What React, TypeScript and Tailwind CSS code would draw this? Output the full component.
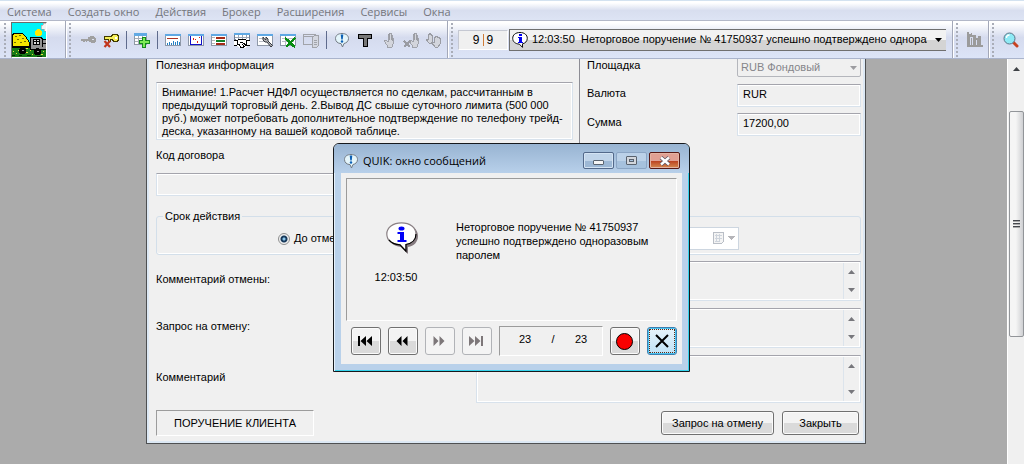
import type { ReactNode } from "react";

const menuItems = ["Система", "Создать окно", "Действия", "Брокер", "Расширения", "Сервисы", "Окна"];

function Icon({ children }: { children: ReactNode }) {
  return (
    <svg viewBox="0 0 16 16" className="block h-4 w-4" shapeRendering="crispEdges" aria-hidden="true">
      {children}
    </svg>
  );
}

function Tool({ label, children }: { label: string; children: ReactNode }) {
  return (
    <button type="button" aria-label={label} className="flex h-6 w-[23px] shrink-0 items-center justify-center">
      {children}
    </button>
  );
}

function Grip() {
  return (
    <span className="flex h-full w-[3px] shrink-0 flex-col gap-[2px] overflow-hidden py-[2px]">
      {Array.from({ length: 9 }, (_, i) => (
        <span key={i} className="h-[2px] w-[2px] shrink-0 bg-[#a9adb8]" />
      ))}
    </span>
  );
}

function BarEdge() {
  return <span className="h-full w-[2px] shrink-0 border-l border-[#a3a8b8] bg-white" />;
}

function Divider() {
  return (
    <span className="flex w-2 shrink-0 justify-center">
      <span className="h-[18px] w-px bg-[#5f6b8d]" />
    </span>
  );
}

function TableFrame() {
  return (
    <>
      <path d="M.5 2.500h15v11H.5z" fill="#fff" stroke="#8e98a8" />
      <path d="M0 2h16v2H0z" fill="#5fa8e4" />
    </>
  );
}

function TruckPicture() {
  return (
    <svg viewBox="0 0 34 34" className="block h-[34px] w-[34px]" shapeRendering="crispEdges" aria-hidden="true">
      <path d="M0 0h34v34H0z" fill="#00f4f8" />
      <path d="M34 0h-3v2h-2v4h3v2h2z" fill="#f4f4f4" stroke="#999" strokeWidth=".6" />
      <circle cx="26.500" cy="9.500" r="3.500" fill="#ffe800" />
      <path d="M0 23h34v11H0z" fill="#167a16" />
      <path d="M0 12l3-2h7l4 4 3 5v4H0z" fill="#f5e500" stroke="#000" />
      <path d="M3 13h2v1H3zM7 12h2v1H7zM5 16h2v1H5zM10 15h2v1h-2zM2 19h2v1H2zM8 19h2v1H8zM12 18h2v1h-2z" fill="#766d00" />
      <path d="M18 14h10l3 2h3v10H18z" fill="#929292" stroke="#000" />
      <path d="M21 16h6v5h-6z" fill="#d9d9d9" stroke="#000" />
      <path d="M24 16v5M21 18.500h6M30 16v8M30 20h4" fill="none" stroke="#000" />
      <path d="M0 23h18v2H0z" fill="#000" />
      <circle cx="10.500" cy="27.500" r="3.500" />
      <circle cx="25.500" cy="28.500" r="3.500" />
      <path d="M10 27h2v1h-2zM25 28h2v1h-2z" fill="#999" />
      <path d="M1 28h1v1H1zM4 30h1v1H4zM6 27h1v1H6zM14 29h2v1h-2zM18 27h1v1h-1zM20 31h1v1h-1zM31 28h1v1h-1zM29 31h2v1h-2zM14 25h2v1h-2z" fill="#e8e13d" />
      <path d="M0 32h3v1H0zM7 32h3v1H7zM15 32h4v1h-4zM25 33h5v1h-5z" fill="#032d03" />
    </svg>
  );
}

const handPath = "M6 15V13L3 9v-1h2l2 2V2h1v6V1h2v7V3h1v6V6h1v6l-1 3z";

function HandIcon({ crossed }: { crossed?: boolean }) {
  return (
    <Icon>
      <path d={handPath} fill="#d3d5dc" stroke="#9a9ca3" strokeWidth=".9" transform={crossed ? "translate(3 0)" : "translate(1 0)"} />
      {crossed && <path d="M1 9l6 6M7 9l-6 6" stroke="#9a9ca3" strokeWidth="1.800" />}
    </Icon>
  );
}

function AlertBubble() {
  return (
    <svg viewBox="0 0 16 16" className="block h-4 w-4 shrink-0" aria-hidden="true">
      <path d="M8 1.500c4 0 6.500 2 6.500 5 0 2.700-2 4.500-4.500 5L8.500 15 7 11.600C3.600 11.400 1.500 9.400 1.500 6.500c0-3 2.500-5 6.500-5z" fill="#e4f5fb" stroke="#737b84" />
      <path d="M6.700 2.600h2.600L8.700 7.600H7.300z" fill="#0a5fb4" />
      <circle cx="8" cy="9.500" r="1.200" fill="#0a5fb4" />
    </svg>
  );
}

function InfoBubble() {
  return (
    <svg viewBox="0 0 16 16" className="block h-4 w-4 shrink-0" aria-hidden="true">
      <path d="M8 .5c4.500 0 7.300 2.400 7.300 5.800 0 3-2 4.900-4.800 5.500v3.600l-3.200-3.300C3.500 12 .7 9.700.7 6.300.7 2.900 3.500.5 8 .5z" fill="#fff" stroke="#111" />
      <path d="M7 2h3v2H7zM6 5h4v5h1v1H6v-1h1V6H6z" fill="#0000f0" shapeRendering="crispEdges" />
    </svg>
  );
}

function BigInfoBubble() {
  return (
    <svg viewBox="0 0 32 32" className="block h-8 w-8" aria-hidden="true">
      <path d="M17 2c9 0 15 5 15 12 0 6-4 10-10 11v7l-7-7C7 24 3 20 3 14 3 7 8 2 17 2z" fill="#867b80" />
      <path d="M15.500.8C24 .8 30 5.500 30 12c0 5.500-4 9.500-10 10.500v6.700l-6-6.400C6 22.500.8 18.500.8 12 .8 5.500 7 .8 15.500.8z" fill="#fff" stroke="#8a8084" strokeWidth="1.200" />
      <path d="M30 12c0 5.500-4 9.500-10 10.500v6.700l-6-6.400c-5-.3-9-2.300-11-5" fill="none" stroke="#000" strokeWidth="1.200" />
      <ellipse cx="15.500" cy="6.500" rx="3" ry="2" fill="#0000f8" />
      <path d="M11.500 10H18v8h2.500v2h-9v-2H14v-6h-2.500z" fill="#0000f8" />
    </svg>
  );
}

function Toolbar() {
  return (
    <div className="flex h-[39px] shrink-0 items-center border-t border-b border-t-[#b3b8c8] border-b-[#aab4cc] bg-linear-to-b from-white from-5% via-[#d5dbee] via-45% to-[#dce4f7] pl-1 pr-[2px]">
      <Grip />
      <button type="button" aria-label="Логотип" className="ml-1 shrink-0 border border-t-[#6c6c6c] border-r-white border-b-white border-l-[#6c6c6c]">
        <TruckPicture />
      </button>
      <span className="w-[18px] shrink-0" />
      <BarEdge />
      <span className="w-[2px] shrink-0" />
      <Grip />
      <span className="w-1 shrink-0" />
      <Tool label="Подключиться">
        <Icon>
          <path d="M1 7h7V5h2V4h4v1h1v1h1v4h-1v1h-4v-1H9V9H7v1H6V9H5v1H3V9H1z" fill="#a0a0a0" />
          <path d="M12 7h2v1h-2z" fill="#dfe3ef" />
        </Icon>
      </Tool>
      <Tool label="Отключиться">
        <Icon>
          <path d="M1.500 4.500h7v-1h1v-1h5v1h1v5h-1v1h-4v-1h-1v-1h-2v2h-2v-2h-4z" fill="#f5ee58" stroke="#403a00" />
          <path d="M12 5h2v2h-2z" fill="#fff" />
          <path d="M1.500 9l5.500 6M7 9l-5.500 6" stroke="#c2371d" strokeWidth="2.200" shapeRendering="auto" />
        </Icon>
      </Tool>
      <Divider />
      <Tool label="Новая таблица">
        <Icon>
          <path d="M.5 1.500h12v11H.5z" fill="#fff" stroke="#9099a5" />
          <path d="M0 1h13v3H0z" fill="#61a9e3" />
          <path d="M1 6.500h11M1 9.500h11M4.500 4v8M8.500 4v8" stroke="#a7adb7" />
          <path d="M8.500 5.500h3v3h4v3h-4v4h-3v-4h-3v-3h3z" fill="#7dea57" stroke="#148a20" />
        </Icon>
      </Tool>
      <Divider />
      <Tool label="График">
        <Icon>
          <TableFrame />
          <path d="M2 7l2-1 2 1 2-1 2 1 3-1" stroke="#ab3225" fill="none" />
          <path d="M2 11h1v2H2zM4 10h1v3H4zM6 11h1v2H6zM8 9h1v4H8zM10 10h1v3h-1zM12 9h1v4h-1zM14 10h1v3h-1z" fill="#237fc4" />
        </Icon>
      </Tool>
      <Tool label="Диаграмма">
        <Icon>
          <TableFrame />
          <path d="M2.500 4v8.500h11V4" stroke="#1010c8" fill="none" />
          <path d="M5 6h1v2H5zM7 7h1v1H7zM9 9h1v2H9zM11 5h1v1h-1z" fill="#e02215" />
        </Icon>
      </Tool>
      <Tool label="Котировки">
        <Icon>
          <TableFrame />
          <path d="M5 5h9v2H5zM5 11h9v2H5z" fill="#a42916" />
          <path d="M5 8h9v2H5z" fill="#138129" />
          <path d="M1 5.500h3M1 8.500h3M1 11.500h3" stroke="#b5b5b5" />
        </Icon>
      </Tool>
      <Tool label="Сделки">
        <Icon>
          <path d="M.5 1.500h15v6H.5z" fill="#fff" stroke="#6d7c93" />
          <path d="M0 1h16v2H0z" fill="#5fa8e4" />
          <path d="M1 5.500h14M4.500 3v4M8.500 3v4M12.500 3v4" stroke="#9ca7b8" />
          <path d="M0 8l4-1 3 1h3l3-1 3 1v6h-2l-3 2H6l-3-2H0z" fill="#fff" />
          <path d="M0 8.500h3l2-1h6l2 1h3M3.500 8v4l2 1 1 2h3l3-2v-5M0 13.500h3M13 13.500h3M6 10h2l4 3M8 12l2 2" stroke="#000" fill="none" />
        </Icon>
      </Tool>
      <Tool label="Настройка таблицы">
        <Icon>
          <TableFrame />
          <path d="M2 6.500h5M2 9.500h5" stroke="#b9bdc6" />
          <path d="M6 5v3l2 2h2l4 5 1.500-1.500L11 9V7L9 5v2.500H8z" fill="#b5b5b8" stroke="#33363c" shapeRendering="auto" />
        </Icon>
      </Tool>
      <Tool label="Удалить таблицу">
        <Icon>
          <TableFrame />
          <path d="M2 6.500h12M2 9.500h12M5.500 4v9" stroke="#b9bdc6" />
          <path d="M5 6l10 9M15 6L6 15" stroke="#078c10" strokeWidth="2.600" />
        </Icon>
      </Tool>
      <Tool label="Копировать">
        <Icon>
          <path d="M.5 2.500h12v10H.5zM0 4.500h10" fill="none" stroke="#a1a3a9" />
          <path d="M9.500 5.500l2-2h4v10l-2 2h-4zM11 8h3M11 10h3M11 12h3" fill="#d4d7e0" stroke="#a1a3a9" />
        </Icon>
      </Tool>
      <Divider />
      <Tool label="Сообщения">
        <AlertBubble />
      </Tool>
      <Tool label="Текст">
        <Icon>
          <path d="M1.500 2.500h13v4h-4v8h-4v-8h-5z" fill="#777" stroke="#000" />
        </Icon>
      </Tool>
      <Tool label="Заявка">
        <HandIcon />
      </Tool>
      <Tool label="Снять заявку">
        <HandIcon crossed />
      </Tool>
      <Tool label="Снять все заявки">
        <Icon>
          <g fill="#d3d5dc" stroke="#9a9ca3">
            <path d="M3 11L.5 8v-1h2V2.500h1v-1h1v1h1v1h1V9l-1 2z" />
            <path d="M9 15l-3-4v-1h2V5.500h1v-1h2v1h2v1h1V12l-2 3z" />
          </g>
        </Icon>
      </Tool>
      <span className="w-[2px] shrink-0" />
      <BarEdge />
      <span className="w-[2px] shrink-0" />
      <Grip />
      <output className="ml-1 flex h-5 w-[50px] shrink-0 items-center justify-center gap-[3px] border border-t-[#c5c8d2] border-r-white border-b-white border-l-[#c5c8d2] bg-[#f0f0f0] text-[12px] text-black">
        <span>9</span>
        <span className="h-3 w-px bg-[#d07c38]" />
        <span>9</span>
      </output>
      <button
        type="button"
        aria-label="Последнее сообщение"
        className="ml-px flex h-[22px] min-w-0 flex-1 items-center border border-r-0 border-[#6f6f6f] bg-linear-to-b from-[#f2f2f2] from-50% to-[#d4d4d4] to-50% pl-[2px] pr-1 text-[11px] text-black"
      >
        <InfoBubble />
        <span className="ml-1 min-w-0 flex-1 overflow-hidden text-left whitespace-pre">
          12:03:50{"  "}Неторговое поручение № 41750937 успешно подтверждено одноразовым
        </span>
        <svg viewBox="0 0 7 4" className="ml-2 h-1 w-[7px] shrink-0" aria-hidden="true">
          <path d="M0 0h7L3.500 4z" />
        </svg>
      </button>
      <span className="w-[6px] shrink-0" />
      <BarEdge />
      <span className="w-[2px] shrink-0" />
      <Grip />
      <span className="w-1 shrink-0" />
      <Tool label="Индикатор">
        <Icon>
          <path d="M0 0h2v2h2v-1h1v2h4v3h2V4h3v9h2v2H0zM3 5v8h1V6h1v7h1V5zM9 8v5h1V8z" fill="#9b9b9b" fillRule="evenodd" />
        </Icon>
      </Tool>
      <span className="w-[2px] shrink-0" />
      <BarEdge />
      <span className="w-[2px] shrink-0" />
      <Grip />
      <span className="w-1 shrink-0" />
      <Tool label="Поиск">
        <svg viewBox="0 0 16 16" className="block h-4 w-4" aria-hidden="true">
          <path d="M10 10l4 4" stroke="#c8431f" strokeWidth="3" strokeLinecap="round" />
          <circle cx="6.500" cy="6.500" r="5.500" fill="#8eeaf5" stroke="#5b7284" />
          <path d="M3.500 6c0-2 1-3 3-3" fill="none" stroke="#fff" strokeWidth="1.300" />
        </svg>
      </Tool>
    </div>
  );
}

const sunken = "border border-t-[#a4a4ac] border-r-[#d8e2ec] border-b-[#d8e2ec] border-l-[#d8e2ec] bg-[#f0f0f0] shadow-[inset_-1px_-1px_0_#fff,inset_1px_1px_0_#fff]";
const raised = "rounded-[3px] border border-[#707070] bg-linear-to-b from-[#f3f3f3] from-50% to-[#dadada] to-50% shadow-[inset_0_0_0_1px_#fbfbfb]";

function CommentRow({ id, label, tall }: { id: string; label: string; tall?: boolean }) {
  return (
    <div className={tall ? "flex h-12 items-center" : "flex h-10 items-center"}>
      <label htmlFor={id} className="w-80 shrink-0 pb-1">
        {label}
      </label>
      <div className={`flex h-full min-w-0 flex-1 ${sunken}`}>
        <textarea id={id} readOnly className="min-w-0 flex-1 resize-none bg-transparent outline-none" />
        <div className="my-px mr-px flex w-4 flex-col items-center justify-between border-l border-[#dce4ec] py-[7px]" aria-hidden="true">
          <svg viewBox="0 0 7 4" className="h-1 w-[7px]">
            <path d="M3.500 0L7 4H0z" fill="#77777c" />
          </svg>
          <svg viewBox="0 0 7 4" className="h-1 w-[7px]">
            <path d="M0 0h7L3.500 4z" fill="#77777c" />
          </svg>
        </div>
      </div>
    </div>
  );
}

function OrderForm() {
  return (
    <form className="w-[720px] shrink-0 self-start border border-t-0 border-[#4e5052] bg-[#f0f0f0] text-[11px] leading-[13px] text-black">
      <div className="flex flex-col border-2 border-t-0 border-[#dce8f4] pr-[2px] pb-[5px] pl-[7px]">
        <div className="flex">
          <div className="w-[417px] shrink-0">
            <p className="h-[23px]">Полезная информация</p>
            <p className={`h-[58px] px-[5px] py-[3px] ${sunken}`}>
              Внимание! 1.Расчет НДФЛ осуществляется по сделкам, рассчитанным в
              <br />
              предыдущий торговый день. 2.Вывод ДС свыше суточного лимита (500 000
              <br />
              руб.) может потребовать дополнительное подтверждение по телефону трейд-
              <br />
              деска, указанному на вашей кодовой таблице.
            </p>
            <label htmlFor="contract" className="mt-[9px] block">
              Код договора
            </label>
            <input id="contract" readOnly className={`mt-[11px] block h-[23px] w-full ${sunken}`} />
          </div>
          <div className="ml-[6px] flex flex-1 flex-col border-l border-[#8d8d95] pl-[7px]">
            <div className="-mt-1 flex h-[29px]">
              <label htmlFor="board" className="w-[150px] shrink-0 pt-1">
                Площадка
              </label>
              <span className="relative h-[22px] min-w-0 flex-1">
                <select id="board" disabled className="block h-full w-full appearance-none rounded-[2px] border border-[#b4b6bc] bg-[#f0f0f0] pt-[3px] pl-[3px] text-[#85858a] opacity-100">
                  <option>RUB Фондовый</option>
                </select>
                <svg viewBox="0 0 7 4" className="pointer-events-none absolute top-[11px] right-1 h-1 w-[7px]" aria-hidden="true">
                  <path d="M0 0h7L3.500 4z" fill="#9c9ca0" />
                </svg>
              </span>
            </div>
            <div className="flex h-[29px]">
              <label htmlFor="currency" className="w-[150px] shrink-0 pt-[3px]">
                Валюта
              </label>
              <input id="currency" readOnly defaultValue="RUR" className={`h-[23px] w-0 min-w-0 flex-1 px-[5px] pb-[3px] ${sunken}`} />
            </div>
            <div className="flex h-[29px]">
              <label htmlFor="amount" className="w-[150px] shrink-0 pt-[3px]">
                Сумма
              </label>
              <input id="amount" readOnly defaultValue="17200,00" className={`h-[23px] w-0 min-w-0 flex-1 px-[5px] pb-[3px] ${sunken}`} />
            </div>
          </div>
        </div>

        <fieldset className="mt-[14px] rounded-[3px] border border-[#d3dfea] pr-[121px] shadow-[inset_0_-1px_0_#fff]">
          <legend className="ml-[6px] px-[2px]">Срок действия</legend>
          <div className="flex h-[31px] items-center justify-between pl-[121px]">
            <label className="flex items-center gap-1">
              <input
                type="radio"
                name="term"
                defaultChecked
                className="m-0 h-3 w-3 appearance-none rounded-full border border-[#8e8f8f] bg-[radial-gradient(circle,#8cc8ee_0_1px,#173a5c_2px_3px,#f0f0f0_4px)]"
              />
              До отмены
            </label>
            <span className="relative w-[120px]">
              <input type="text" aria-label="Дата" disabled className="block h-[23px] w-full border border-[#cdd6e0] bg-white" />
              <svg viewBox="0 0 22 13" className="absolute top-[5px] right-1 h-[13px] w-[22px]" aria-hidden="true" shapeRendering="crispEdges">
                <path d="M.5.5h10v9l-2 2h-8z" fill="#f4f4f4" stroke="#b9bec6" />
                <path d="M2 3.500h7M2 6.500h7M2 9.500h5M3.500 2v8M6.500 2v8" stroke="#ced4dc" />
                <path d="M15 4h7l-3.500 4z" fill="#b5b5b9" />
              </svg>
            </span>
          </div>
        </fieldset>

        <div className="mt-[6px] flex flex-col gap-[7px]">
          <CommentRow id="cancel-comment" label="Комментарий отмены:" />
          <CommentRow id="cancel-request" label="Запрос на отмену:" />
          <CommentRow id="comment" label="Комментарий" tall />
        </div>

        <div className="mt-[7px] flex items-center">
          <p className="flex h-[26px] w-[158px] items-center justify-center border border-t-[#9c9c9c] border-r-white border-b-white border-l-[#9c9c9c]">
            ПОРУЧЕНИЕ КЛИЕНТА
          </p>
          <button type="button" className={`ml-auto h-6 w-[113px] ${raised}`}>
            Запрос на отмену
          </button>
          <button type="button" className={`mr-[2px] ml-2 h-6 w-[77px] ${raised}`}>
            Закрыть
          </button>
        </div>
      </div>
    </form>
  );
}

function NavButton({ label, disabled, children }: { label: string; disabled?: boolean; children: ReactNode }) {
  return (
    <button
      type="button"
      aria-label={label}
      disabled={disabled}
      className={
        disabled
          ? "flex h-7 w-[30px] shrink-0 items-center justify-center rounded-[3px] border border-[#b1b3b7] bg-[#f4f4f4] pr-[2px] text-[#7d7779]"
          : `flex h-7 w-[30px] shrink-0 items-center justify-center pr-[2px] text-black ${raised}`
      }
    >
      {children}
    </button>
  );
}

function MessageWindow() {
  return (
    <section
      role="dialog"
      aria-labelledby="message-title"
      className="absolute top-[143px] left-[333px] w-[357px] rounded-t-[6px] border border-[#16191d] bg-[#b9d1ea] shadow-[inset_1px_1px_0_#e6f1fb,inset_-1px_-1px_0_#35d3ec] text-black"
    >
      <header className="flex h-[29px] items-center rounded-t-[5px] bg-linear-to-b from-[#98b4d2] to-[#b8d0ea] px-[9px] pt-1">
        <AlertBubble />
        <h2 id="message-title" className="ml-1 flex-1 pt-px font-['Open_Sans','Noto_Sans',sans-serif] text-[11px]">
          QUIK: окно сообщений
        </h2>
        <div className="flex gap-[2px]">
          <button type="button" aria-label="Свернуть" className="flex h-[17px] w-[31px] items-center justify-center rounded-[2px] border border-[#53698a] bg-linear-to-b from-[#c0d4e9] from-50% to-[#9db8d5] to-50% shadow-[inset_0_0_0_1px_#d3e3f3]">
            <span className="mt-1 h-[5px] w-[11px] rounded-[1px] border border-[#5a6470] bg-[#f5f5f5]" />
          </button>
          <button type="button" aria-label="Развернуть" disabled className="flex h-[17px] w-[31px] items-center justify-center rounded-[2px] border border-[#8ba5c4] bg-linear-to-b from-[#bbd1e8] from-50% to-[#a6c1dd] to-50%">
            <span className="flex h-[9px] w-[11px] items-center justify-center rounded-[1px] border border-[#59626e] bg-[#d2d6dc]">
              <span className="h-[3px] w-[5px] border border-[#59626e] bg-[#a6c1dd]" />
            </span>
          </button>
          <button type="button" aria-label="Закрыть окно" className="flex h-[17px] w-[31px] items-center justify-center rounded-[2px] border border-[#571916] bg-linear-to-b from-[#e0a093] from-50% via-[#b93a1c] via-50% to-[#d48a50] shadow-[inset_0_0_0_1px_#e3b3a2]">
            <svg viewBox="0 0 12 10" className="h-[10px] w-3" aria-hidden="true">
              <path d="M2 1.500l8 7M10 1.500l-8 7" stroke="#5b5561" strokeWidth="4" />
              <path d="M2 1.500l8 7M10 1.500l-8 7" stroke="#fff" strokeWidth="2.400" />
            </svg>
          </button>
        </div>
      </header>
      <div className="mx-[7px] mb-[7px] bg-[#f0f0f0] p-[5px] pb-2">
        <div className="flex h-[143px] items-center border border-t-[#9b9b9b] border-r-white border-b-white border-l-[#9b9b9b]">
          <div className="ml-[25px] flex w-12 shrink-0 flex-col items-center gap-4 pt-[6px]">
            <div className="pl-3">
              <BigInfoBubble />
            </div>
            <time className="text-[11px] leading-[14px]">12:03:50</time>
          </div>
          <p className="mb-[18px] ml-9 flex-1 text-[11px] leading-[14px]">
            Неторговое поручение № 41750937
            <br />
            успешно подтверждено одноразовым
            <br />
            паролем
          </p>
        </div>
        <div className="mt-[5px] flex items-center gap-[7px] pl-[5px]">
          <NavButton label="К первому">
            <svg viewBox="0 0 14 10" className="h-[10px] w-[14px]" fill="currentColor" aria-hidden="true">
              <path d="M0 0h2v10H0zM8 0v10L2.500 5zM14 0v10L8.500 5z" />
            </svg>
          </NavButton>
          <NavButton label="Назад">
            <svg viewBox="0 0 12 10" className="h-[10px] w-3" fill="currentColor" aria-hidden="true">
              <path d="M5.500 0v10L.5 5zM11.500 0v10l-5-5z" />
            </svg>
          </NavButton>
          <NavButton label="Вперёд" disabled>
            <svg viewBox="0 0 12 10" className="h-[10px] w-3" fill="currentColor" aria-hidden="true">
              <path d="M.5 0v10l5-5zM6.500 0v10l5-5z" />
            </svg>
          </NavButton>
          <NavButton label="К последнему" disabled>
            <svg viewBox="0 0 14 10" className="h-[10px] w-[14px]" fill="currentColor" aria-hidden="true">
              <path d="M12 0h2v10h-2zM0 0v10l5.500-5zM6 0v10l5.500-5z" />
            </svg>
          </NavButton>
          <p className="flex h-[30px] min-w-0 flex-1 items-center justify-center border border-t-[#9b9b9b] border-r-white border-b-white border-l-[#9b9b9b] pb-1 pl-1 text-[11px]">
            <span className="w-7 text-center">23</span>
            <span className="w-7 text-center">/</span>
            <span className="w-7 text-center">23</span>
          </p>
          <NavButton label="Остановить">
            <span className="h-[17px] w-[17px] rounded-full border border-black bg-[#fb0000]" />
          </NavButton>
          <button
            type="button"
            aria-label="Закрыть сообщение"
            className="flex h-7 w-[30px] shrink-0 items-center justify-center rounded-[3px] border border-[#3c7fb1] bg-linear-to-b from-[#e8f4fb] to-[#bfe2f6] shadow-[inset_0_0_0_1px_#48c4f2]"
          >
            <span className="flex h-6 w-[26px] items-center justify-center border border-dotted border-[#5f2a14]">
              <svg viewBox="0 0 14 14" className="h-[14px] w-[14px]" aria-hidden="true">
                <path d="M1 1l12 12M13 1L1 13" stroke="#000" strokeWidth="2" />
              </svg>
            </span>
          </button>
        </div>
      </div>
    </section>
  );
}

function PageScrollbar() {
  return (
    <div className="flex w-[17px] shrink-0 flex-col items-center border-l border-white bg-[#f0f0f0] pt-2" aria-hidden="true">
      <svg viewBox="0 0 7 4" className="h-1 w-[7px] shrink-0">
        <path d="M3.500 0L7 4H0z" fill="#3f4246" />
      </svg>
      <div className="mt-10 flex h-[226px] w-[15px] shrink-0 flex-col items-center justify-center gap-px rounded-[2px] border border-[#929599] bg-linear-to-r from-[#f5f5f5] from-45% to-[#cfd0d3]">
        <span className="h-[2px] w-[7px] border-b border-[#aaa] bg-[#45484e]" />
        <span className="h-[2px] w-[7px] border-b border-[#aaa] bg-[#45484e]" />
        <span className="h-[2px] w-[7px] border-b border-[#aaa] bg-[#45484e]" />
      </div>
    </div>
  );
}

export default function App() {
  return (
    <div className="relative flex h-screen flex-col overflow-hidden bg-[#ababab] font-['Liberation_Sans',Arial,sans-serif]">
      <nav className="flex h-5 shrink-0 items-center gap-4 border-t border-[#d3e2f0] bg-linear-to-b from-white from-10% via-[#d8deef] via-50% to-[#dde4f4] pl-[7px] pt-[2px] font-['Open_Sans','Noto_Sans',sans-serif] text-[11px] leading-4 text-[#74767c]">
        {menuItems.map((item) => (
          <button type="button" key={item} className="shrink-0">
            {item}
          </button>
        ))}
      </nav>
      <Toolbar />
      <main className="flex min-h-0 flex-1">
        <div className="flex min-w-0 flex-1 overflow-hidden pl-[146px]">
          <OrderForm />
        </div>
        <PageScrollbar />
      </main>
      <MessageWindow />
    </div>
  );
}
